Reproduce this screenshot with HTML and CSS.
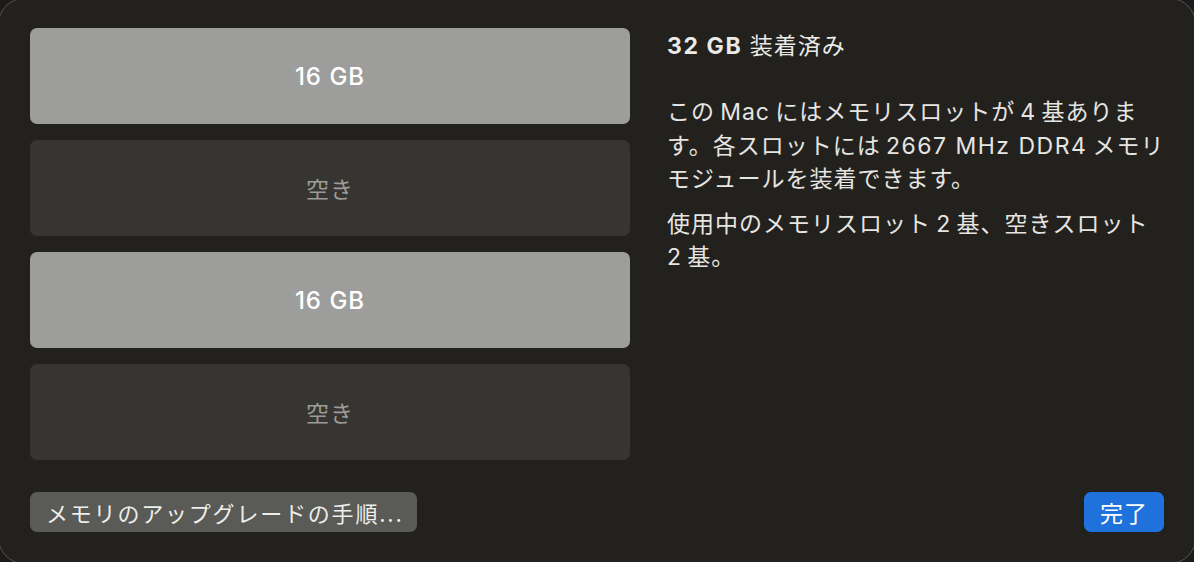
FILE: index.html
```html
<!DOCTYPE html>
<html lang="ja">
<head>
<meta charset="utf-8">
<link rel="stylesheet" href="styles.css">
</head>
<body>
<div class="window">
  <div class="main">
    <div class="slots">
      <div class="slot filled">16 GB</div>
      <div class="slot empty">空き</div>
      <div class="slot filled">16 GB</div>
      <div class="slot empty">空き</div>
    </div>
    <div class="info">
      <h1 class="title"><b>32 GB</b> 装着済み</h1>
      <p class="para">この&thinsp;Mac&thinsp;にはメモリスロットが&thinsp;4&thinsp;基ありま<br>す。各スロットには&thinsp;<span class="latin">2667 MHz DDR4</span>&thinsp;メモリ<br>モジュールを装着できます。</p>
      <p class="para">使用中のメモリスロット&thinsp;2&thinsp;基、空きスロット<br>2&thinsp;基。</p>
    </div>
  </div>
  <div class="footer">
    <button class="btn btn-secondary">メモリのアップグレードの手順...</button>
    <button class="btn btn-primary">完了</button>
  </div>
</div>
</body>
</html>
```

FILE: styles.css
```css
* { box-sizing: border-box; }
html, body {
  margin: 0;
  padding: 0;
  width: 1194px;
  height: 562px;
  overflow: hidden;
  background: #1c1b19;
  font-family: "Inter", "Noto Sans CJK JP", sans-serif;
}
.window {
  margin: -2px;
  width: 1198px;
  height: 566px;
  background: #22211e;
  border: 1px solid #555451;
  border-radius: 26px;
  padding: 29px 30px 31px 31px;
  display: flex;
  flex-direction: column;
}
.main {
  display: flex;
  gap: 37px;
  flex: 1;
}
.slots {
  width: 600px;
  flex: none;
  display: flex;
  flex-direction: column;
  gap: 16px;
}
.slot {
  height: 96px;
  border-radius: 7px;
  display: flex;
  align-items: center;
  justify-content: center;
  font-size: 24px;
  font-weight: 500;
  letter-spacing: 1px;
}
.slot.filled {
  background: #9d9d9b;
  color: #ffffff;
}
.slot.empty {
  background: #363532;
  color: #9c9b98;
  font-weight: 400;
  font-size: 23px;
}
.info {
  color: #e6e5e2;
  padding-top: 3px;
  white-space: nowrap;
}
.title {
  margin: 0;
  font-size: 23px;
  font-weight: 400;
  line-height: 30px;
  letter-spacing: 1px;
  color: #ebeae7;
}
.title b { font-weight: 700; letter-spacing: 1.6px; }
.para {
  margin: 35px 0 0;
  font-size: 23px;
  line-height: 33.5px;
  letter-spacing: 1px;
}
.para .latin { letter-spacing: 1.5px; }
.para + .para { margin-top: 11px; }
.footer {
  display: flex;
  justify-content: space-between;
  align-items: center;
  padding-right: 1px;
}
.btn {
  height: 40px;
  border: none;
  border-radius: 7px;
  font-family: inherit;
  font-size: 22px;
  letter-spacing: 1.8px;
  padding: 0 16px;
  white-space: nowrap;
}
.btn-secondary {
  width: 387px;
  background: #5a5a56;
  color: #eeeeec;
  text-align: left;
}
.btn-primary {
  width: 80px;
  padding: 0;
  background: #1f71dc;
  color: #ffffff;
  text-align: center;
  font-size: 23px;
  letter-spacing: 1px;
}
```
